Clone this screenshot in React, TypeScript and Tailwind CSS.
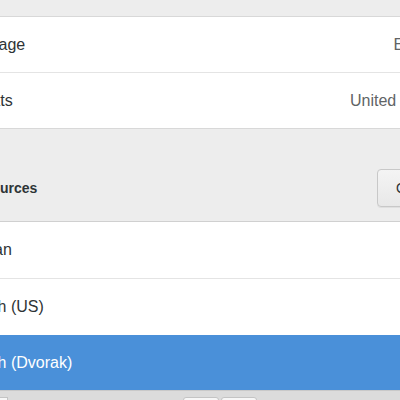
export default function App() {
  return (
    <div className="w-[400px] h-[400px] overflow-hidden bg-[#ededed] font-['Liberation_Sans',Arial,sans-serif] text-[16px] text-[#2e3436]">
      <div className="-ml-[66px] w-[532px]">
        {/* top spacing */}
        <div className="h-[16px]" />

        {/* language / formats panel */}
        <div className="bg-white border-y border-[#d8d8d8]">
          <div className="h-[55px] flex items-center justify-between px-5">
            <span>Language</span>
            <span className="text-[#5f6466]">English</span>
          </div>
          <div className="border-t border-[#e4e4e4]" />
          <div className="h-[55px] flex items-center justify-between px-5">
            <span>Formats</span>
            <span className="text-[#5f6466]">United States</span>
          </div>
        </div>

        {/* input sources header */}
        <div className="h-[92px] pt-[26px] flex items-center pl-[10px] pr-[9px]">
          <span className="text-[14px] font-bold">Input Sources</span>
          <button className="ml-auto w-[80px] h-[38px] pl-[18px] text-left rounded-[4px] border border-[#c8c8c8] bg-gradient-to-b from-[#f4f4f4] to-[#e8e8e8] text-[14px] text-[#2e3436] shadow-[0_1px_0_rgba(0,0,0,0.06)]">
            Options
          </button>
        </div>

        {/* input sources list */}
        <div className="border-t border-[#d0d0d0] bg-white">
          <div className="h-[56px] flex items-center px-5">German</div>
          <div className="border-t border-[#e4e4e4]" />
          <div className="h-[56px] flex items-center px-5">English (US)</div>
          <div className="h-[55px] flex items-center px-5 bg-[#4a90d9] text-white">English (Dvorak)</div>
        </div>

        {/* toolbar */}
        <div className="h-[20px] bg-[#dcdcdc] border-t border-[#c9c9c9]">
          <div className="flex pt-[6px] pl-[64px] gap-[175px]">
            <div className="w-[10px] h-[14px] bg-[#f7f7f7] border border-[#c4c4c4]" />
            <div className="flex gap-[2px]">
              <div className="w-[36px] h-[14px] bg-[#f7f7f7] border border-[#c4c4c4] rounded-t-[3px]" />
              <div className="w-[36px] h-[14px] bg-[#f7f7f7] border border-[#c4c4c4] rounded-t-[3px]" />
            </div>
          </div>
        </div>
      </div>
    </div>
  );
}
